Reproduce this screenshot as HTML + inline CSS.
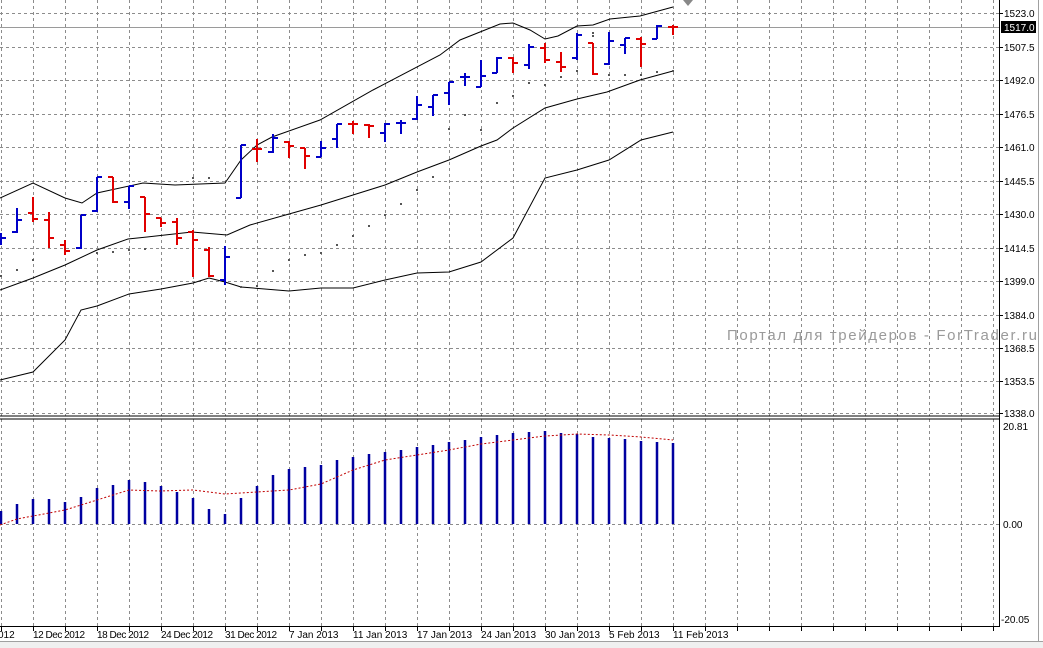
<!DOCTYPE html>
<html><head><meta charset="utf-8"><style>
html,body{margin:0;padding:0;background:#fff;width:1043px;height:648px;overflow:hidden}
svg{display:block;font-family:"Liberation Sans",sans-serif}
</style></head><body>
<svg id="s" width="1043" height="648" viewBox="0 0 1043 648" xmlns="http://www.w3.org/2000/svg">
<rect width="1043" height="648" fill="#fff"/>
<g id="grid" stroke="#8c8c8c" stroke-width="1" stroke-dasharray="3,3"></g>
<line x1="0" y1="27.5" x2="1000" y2="27.5" stroke="#9a9a9a"/>
<g id="bands" fill="none" stroke="#000" stroke-width="1"></g>
<g id="dots" fill="#555"></g>
<g id="bars" stroke-width="2" fill="none"></g>
<g id="hist" stroke="#0000a0" stroke-width="2.5"></g>
<polyline id="sig" fill="none" stroke="#c00000" stroke-width="1" stroke-dasharray="2,2"/>
<line x1="0" y1="416" x2="1000" y2="416" stroke="#000"/>
<line x1="0" y1="419" x2="1000" y2="419" stroke="#000"/>
<line x1="999.5" y1="0" x2="999.5" y2="627" stroke="#000"/>
<line x1="0" y1="626.5" x2="1000" y2="626.5" stroke="#000"/>
<line x1="1038.5" y1="0" x2="1038.5" y2="641" stroke="#a0a0a0"/>
<rect x="0" y="641" width="1043" height="7" fill="#f0f0f0"/>
<line x1="0" y1="641.5" x2="1043" y2="641.5" stroke="#a0a0a0"/>
<polygon points="683,0 693,0 688,6" fill="#888"/>
<g font-size="10" fill="#000">
<text x="1004" y="17">1523.0</text>
<rect x="1001" y="21" width="35" height="12" fill="#000"/>
<text x="1004" y="31" fill="#fff">1517.0</text>
<text x="1004" y="51">1507.5</text>
<text x="1004" y="84">1492.0</text>
<text x="1004" y="118">1476.5</text>
<text x="1004" y="151">1461.0</text>
<text x="1004" y="185">1445.5</text>
<text x="1004" y="218">1430.0</text>
<text x="1004" y="252">1414.5</text>
<text x="1004" y="285">1399.0</text>
<text x="1004" y="319">1384.0</text>
<text x="1004" y="352">1368.5</text>
<text x="1004" y="385">1353.5</text>
<text x="1004" y="417">1338.0</text>
<text x="1003" y="430">20.81</text>
<text x="1003" y="528">0.00</text>
<text x="1001" y="623">-20.05</text>
<text x="-2" y="638">012</text>
<text x="33" y="638" textLength="52">12 Dec 2012</text>
<text x="97" y="638" textLength="52">18 Dec 2012</text>
<text x="161" y="638" textLength="52">24 Dec 2012</text>
<text x="225" y="638" textLength="52">31 Dec 2012</text>
<text x="289" y="638">7 Jan 2013</text>
<text x="353" y="638">11 Jan 2013</text>
<text x="417" y="638">17 Jan 2013</text>
<text x="481" y="638">24 Jan 2013</text>
<text x="545" y="638">30 Jan 2013</text>
<text x="609" y="638">5 Feb 2013</text>
<text x="673" y="638">11 Feb 2013</text>
</g>
<text x="727" y="340" font-size="15" fill="#9a9a9a" textLength="310" lengthAdjust="spacing">Портал для трейдеров - ForTrader.ru</text>
</svg>
<script>
var NS="http://www.w3.org/2000/svg";
function el(p,t,a){var e=document.createElementNS(NS,t);for(var k in a)e.setAttribute(k,a[k]);document.getElementById(p).appendChild(e);return e;}
for(var x=1;x<1000;x+=32){el("grid","line",{x1:x+.5,y1:0,x2:x+.5,y2:416});el("grid","line",{x1:x+.5,y1:419,x2:x+.5,y2:627});
 el("grid","line",{x1:x+.5,y1:627,x2:x+.5,y2:631,"stroke-dasharray":"none",stroke:"#000"});}
[13,47,80,114,147,181,214,248,281,315,348,381,413].forEach(function(y){el("grid","line",{x1:0,y1:y+.5,x2:1000,y2:y+.5});el("grid","line",{x1:1000,y1:y+.5,x2:1003,y2:y+.5,"stroke-dasharray":"none",stroke:"#000"});});
el("grid","line",{x1:0,y1:524.5,x2:1000,y2:524.5});
var up="0,198 33,183 65,198 82,203 97,193 143,183 175,185 225,183 241,160 257,145 272,137 320,120 373,90 440,55 460,40 500,24 513,23 530,30 545,39 558,36 577,26 593,25 610,19 640,16 673,7";
var mid="0,290 33,278 65,265 97,250 128,239 147,237 192,232 227,235 250,225 289,214 321,205 353,195 385,185 417,172 449,160 481,146 497,140 513,128 545,108 577,99 607,92 640,80 673,71";
var lo="0,380 33,372 65,340 81,310 97,306 129,294 161,289 193,283 209,278 225,282 241,287 289,291 321,288 353,288 385,280 417,273 449,272 481,262 513,238 545,178 577,170 609,160 641,140 673,132";
[up,mid,lo].forEach(function(p){el("bands","polyline",{points:p});});
var B=[[233,245,240,238,0],[208,233,232,220,0],[197,222,213,219,1],[212,248,220,238,1],[240,255,245,251,1],[215,249,248,215,0],[177,212,211,177,0],[177,203,177,202,1],[186,209,202,186,0],[197,232,197,214,1],[218,227,218,223,1],[218,245,222,238,1],[230,277,232,240,1],[247,277,250,276,1],[246,285,280,257,0],[145,198,198,145,0],[139,162,149,149,1],[134,153,152,138,0],[141,158,142,146,1],[148,169,148,156,1],[141,157,157,148,0],[124,148,139,124,0],[121,134,124,124,1],[124,138,125,126,1],[123,142,133,124,0],[120,134,123,123,0],[96,120,119,105,0],[95,116,107,95,0],[82,105,93,82,0],[73,86,77,77,0],[60,87,87,76,0],[57,73,73,58,0],[57,73,58,63,1],[44,69,65,47,0],[43,63,48,60,1],[52,72,62,67,1],[33,60,58,35,0],[43,75,43,74,1],[32,65,64,41,0],[38,54,45,38,0],[37,67,39,44,1],[25,39,39,26,0],[25,35,27,27,1]];
B.forEach(function(b,i){var x=1+16*i,c=b[4]?"#e00000":"#0000c8";
 el("bars","line",{x1:x,y1:b[0],x2:x,y2:b[1],stroke:c});
 el("bars","line",{x1:x-5,y1:b[2],x2:x,y2:b[2],stroke:c});
 el("bars","line",{x1:x,y1:b[3],x2:x+5,y2:b[3],stroke:c});});
var D=[[1,276],[17,270],[33,260],[97,253],[113,252],[129,250],[145,249],[193,178],[209,178],[241,287],[257,286],[273,271],[289,260],[305,255],[321,253],[337,245],[353,236],[369,226],[385,215],[401,204],[417,190],[433,177],[449,129],[465,115],[481,130],[497,103],[513,96],[529,83],[545,85],[561,77],[577,71],[593,33],[609,75],[625,75],[641,75],[657,72],[673,71],[593,36]];
D.forEach(function(d){el("dots","rect",{x:d[0]-1,y:d[1]-1,width:2,height:2});});
var H=[511,504,499,499,502,497,488,485,480,482,486,492,498,509,514,498,486,475,469,467,465,460,457,454,452,450,447,445,442,440,437,435,433,432,431,433,434,437,438,439,441,442,443];
H.forEach(function(h,i){var x=1+16*i;el("hist","line",{x1:x,y1:524,x2:x,y2:h});});
document.getElementById("sig").setAttribute("points","0,525 17,519 33,516 65,510 97,500 129,490 161,491 193,490 225,494 257,492 289,490 321,484 353,470 385,460 417,455 449,450 481,444 513,440 545,436 577,434 609,435 641,437 673,440");
</script>
</body></html>
